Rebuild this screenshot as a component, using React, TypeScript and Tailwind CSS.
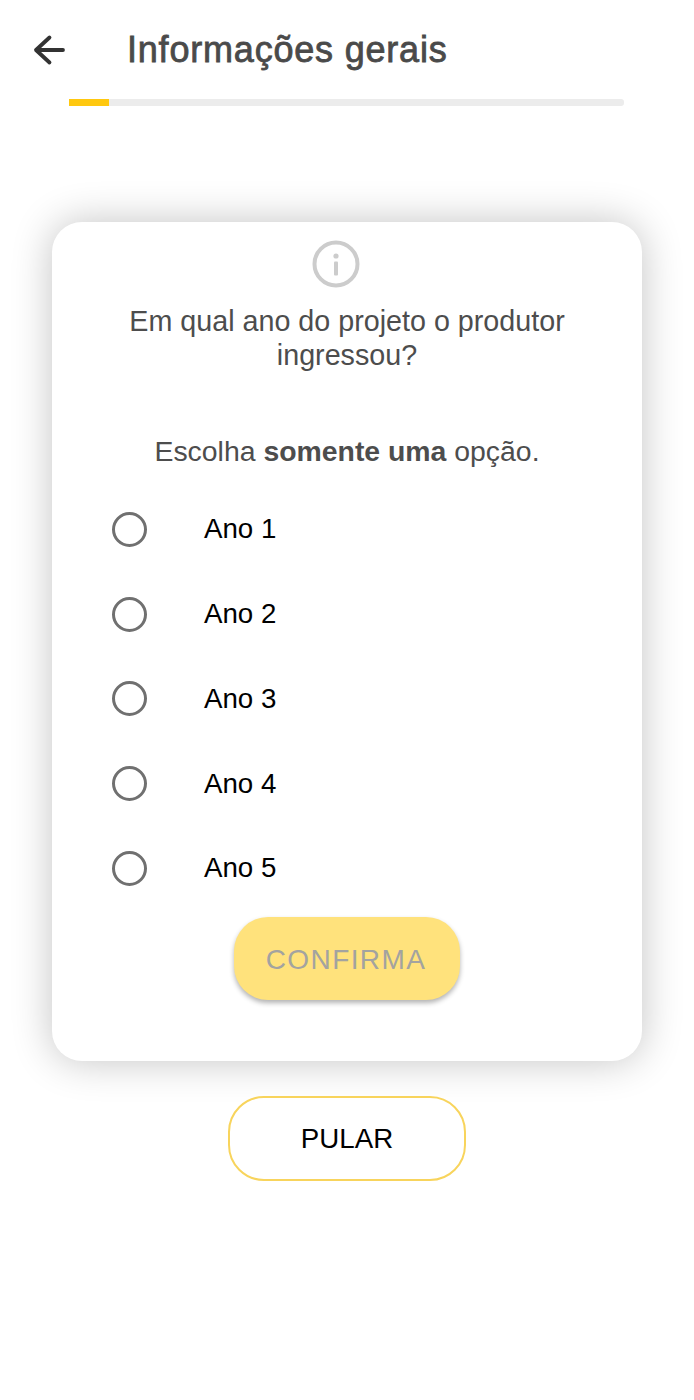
import React from "react";

const options = ["Ano 1", "Ano 2", "Ano 3", "Ano 4", "Ano 5"];

function App() {
  return (
    <div className="w-[694px] h-[1400px] bg-white font-['Liberation_Sans',Arial,sans-serif] overflow-hidden">
      <div className="flex items-center h-[99px] pl-[32px]">
        <svg width="34" height="32" viewBox="0 0 34 32" fill="none" className="mr-[61px]">
          <path
            d="M31 16H4M17.5 3.5L4 16l13.5 12.5"
            stroke="#333333"
            strokeWidth="3.8"
            strokeLinecap="round"
            strokeLinejoin="round"
          />
        </svg>
        <h1 className="text-[36px] leading-[40px] tracking-[0.8px] text-[#4a4a4a] [-webkit-text-stroke:0.8px_#4a4a4a]">
          Informações gerais
        </h1>
      </div>

      <div className="ml-[69px] w-[555px] h-[7px] rounded-r-[3px] bg-[#ececec]">
        <div className="w-[40px] h-[7px] bg-[#ffc80f]"></div>
      </div>

      <div className="mt-[116px] ml-[52px] w-[590px] h-[839px] rounded-[30px] bg-white shadow-[0_0_40px_rgba(0,0,0,0.24)] flex flex-col items-center pt-[18px]">
        <svg width="48" height="48" viewBox="0 0 48 48" fill="none" className="mr-[23px]">
          <circle cx="24" cy="24" r="21.5" stroke="#cccccc" strokeWidth="4" />
          <circle cx="24" cy="16" r="2.6" fill="#cccccc" />
          <rect x="22" y="21.5" width="4" height="14" rx="1" fill="#cccccc" />
        </svg>

        <p className="mt-[16px] w-[480px] text-center text-[28.7px] leading-[34px] text-[#4d4d4d]">
          Em qual ano do projeto o produtor ingressou?
        </p>

        <p className="mt-[62px] text-center text-[28.4px] leading-[34px] text-[#4d4d4d]">
          Escolha <span className="font-bold">somente uma</span> opção.
        </p>

        <div className="mt-[19px] w-full flex flex-col">
          {options.map((option) => (
            <div key={option} className="flex items-center h-[84.75px] pl-[60px]">
              <div className="w-[35px] h-[35px] rounded-full border-[3.8px] border-[#707070] mr-[57px]"></div>
              <span className="text-[27.7px] leading-[34px] text-black">{option}</span>
            </div>
          ))}
        </div>

        <button className="mt-[6px] w-[226px] h-[83px] pt-[3px] pr-[2px] rounded-[34px] bg-[#ffe27c] shadow-[0_3px_5px_rgba(0,0,0,0.3)] text-[28px] tracking-[1.4px] text-[#a3a3a0]">
          CONFIRMA
        </button>
      </div>

      <div className="mt-[35px] flex justify-center">
        <button className="w-[238px] h-[85px] rounded-[36px] border-2 border-[#f8d45c] bg-white text-[27.7px] text-black">
          PULAR
        </button>
      </div>
    </div>
  );
}

export default App;
